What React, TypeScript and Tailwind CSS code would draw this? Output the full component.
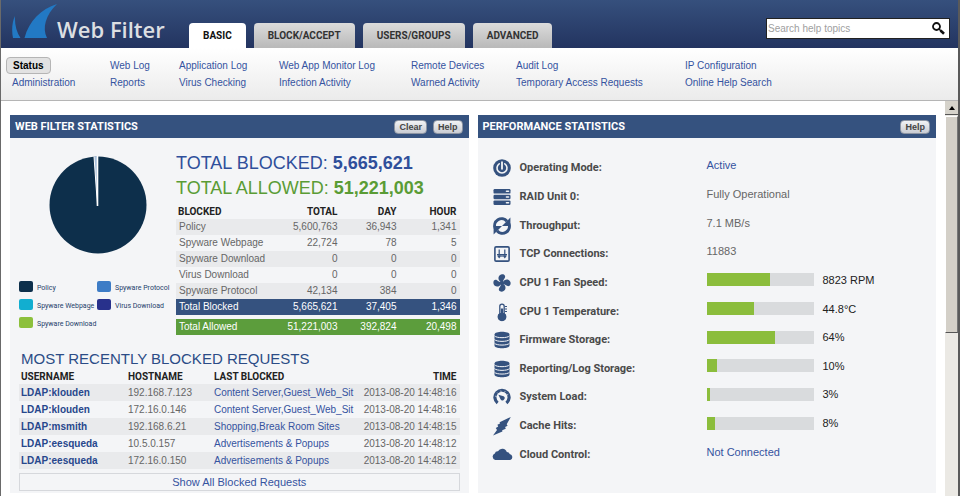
import React from 'react'

type NavColumn = { width: string; items: string[] }

const tabs = ['BASIC', 'BLOCK/ACCEPT', 'USERS/GROUPS', 'ADVANCED']

const navColumns: NavColumn[] = [
  { width: 'w-[98px]', items: ['Status', 'Administration'] },
  { width: 'w-[69px]', items: ['Web Log', 'Reports'] },
  { width: 'w-[100px]', items: ['Application Log', 'Virus Checking'] },
  { width: 'w-[132px]', items: ['Web App Monitor Log', 'Infection Activity'] },
  { width: 'w-[105px]', items: ['Remote Devices', 'Warned Activity'] },
  { width: 'w-[169px]', items: ['Audit Log', 'Temporary Access Requests'] },
  { width: 'flex-1', items: ['IP Configuration', 'Online Help Search'] },
]

const legend = [
  { label: 'Policy', color: 'bg-[#0d2f4b]' },
  { label: 'Spyware Protocol', color: 'bg-[#3d7cc6]' },
  { label: 'Spyware Webpage', color: 'bg-[#12aed0]' },
  { label: 'Virus Download', color: 'bg-[#28318c]' },
  { label: 'Spyware Download', color: 'bg-[#8cc03c]' },
]

const blocked = [
  ['Policy', '5,600,763', '36,943', '1,341'],
  ['Spyware Webpage', '22,724', '78', '5'],
  ['Spyware Download', '0', '0', '0'],
  ['Virus Download', '0', '0', '0'],
  ['Spyware Protocol', '42,134', '384', '0'],
]

const requests = [
  { user: 'LDAP:klouden', host: '192.168.7.123', last: 'Content Server,Guest_Web_Sit', time: '2013-08-20 14:48:16' },
  { user: 'LDAP:klouden', host: '172.16.0.146', last: 'Content Server,Guest_Web_Sit', time: '2013-08-20 14:48:16' },
  { user: 'LDAP:msmith', host: '192.168.6.21', last: 'Shopping,Break Room Sites', time: '2013-08-20 14:48:15' },
  { user: 'LDAP:eesqueda', host: '10.5.0.157', last: 'Advertisements & Popups', time: '2013-08-20 14:48:12' },
  { user: 'LDAP:eesqueda', host: '172.16.0.150', last: 'Advertisements & Popups', time: '2013-08-20 14:48:12' },
]

const icons: Record<string, React.ReactNode> = {
  power: (
    <>
      <circle cx="9" cy="9" r="8.8" fill="currentColor" />
      <path d="M6.2 4.8a5 5 0 1 0 5.6 0" fill="none" stroke="#f4f5f7" strokeWidth="1.6" strokeLinecap="round" />
      <path d="M9 3.2v6.6" stroke="#f4f5f7" strokeWidth="1.8" strokeLinecap="round" />
    </>
  ),
  raid: (
    <>
      <rect x="0.5" y="1" width="17" height="4.6" rx="1.2" fill="currentColor" />
      <rect x="0.5" y="6.7" width="17" height="4.6" rx="1.2" fill="currentColor" />
      <rect x="0.5" y="12.4" width="17" height="4.6" rx="1.2" fill="currentColor" />
      <path d="M13.5 3.3h2M13.5 9h2M13.5 14.7h2" stroke="#f4f5f7" strokeWidth="1.6" strokeLinecap="round" />
    </>
  ),
  throughput: (
    <g fill="none" stroke="currentColor" strokeWidth="3">
      <path d="M2.2 11.5A7 7 0 0 1 14 4.2" />
      <path d="M15.8 6.5A7 7 0 0 1 4 13.800" />
      <path d="M17.4.6v8.400H9zM.6 17.400V9H9z" fill="currentColor" stroke="none" />
    </g>
  ),
  tcp: (
    <>
      <rect x="1.9" y="1.9" width="14.2" height="14.2" rx="1.2" fill="none" stroke="currentColor" strokeWidth="1.6" />
      <path d="M6.2 4.4v7M11.8 4.4v7M4 9.5h10M9 9.5v2.6M4.6 10.4l1.6 2.2 1.6-2.2M10.2 10.4l1.6 2.2 1.6-2.2" fill="none" stroke="currentColor" strokeWidth="1.2" />
    </>
  ),
  fan: (
    <g fill="currentColor">
      <path d="M8.6 8.4C4.4 6.8 4.6 1.4 8.2.5c3-.7 4.8 1.4 3.6 3.5-.9 1.5-1.8 2.2-1.9 4.2z" />
      <path d="M9.6 8.6c1.6-4.2 7-4 7.9-.4.7 3-1.4 4.8-3.5 3.6-1.5-.9-2.2-1.8-4.2-1.9z" />
      <path d="M9.4 9.6c4.2 1.6 4 7 .4 7.9-3 .7-4.8-1.4-3.6-3.5.9-1.5 1.8-2.2 1.9-4.2z" />
      <path d="M8.4 9.4c-1.6 4.2-7 4-7.9.4C-.2 6.8 1.9 5 4 6.2c1.5.9 2.2 1.8 4.2 1.9z" />
      <circle cx="9" cy="9" r="1.6" />
    </g>
  ),
  temperature: (
    <>
      <path d="M9 1.1a2.2 2.2 0 0 1 2.2 2.2v7.4a3.8 3.8 0 1 1-4.4 0V3.3A2.2 2.2 0 0 1 9 1.1z" fill="#f4f5f7" stroke="currentColor" strokeWidth="1.3" />
      <circle cx="9" cy="13.8" r="4" fill="currentColor" />
      <path d="M9 5.5v7" stroke="currentColor" strokeWidth="2.4" />
      <path d="M12 3.5h2M12 6h2M12 8.5h2" stroke="currentColor" strokeWidth="1.2" />
    </>
  ),
  storage: (
    <>
      <path d="M1.5 3.5C1.5-.2 16.5-.2 16.5 3.5v11c0 3.7-15 3.7-15 0z" fill="currentColor" />
      <path d="M1.5 4.8c1.6 2.5 13.4 2.5 15 0M1.5 8.5c1.6 2.5 13.4 2.5 15 0M1.5 12.2c1.6 2.5 13.4 2.5 15 0" fill="none" stroke="#f4f5f7" strokeWidth="1" />
    </>
  ),
  load: (
    <>
      <path d="M4.6 14.9a7.1 7.1 0 1 1 8.8 0" fill="none" stroke="currentColor" strokeWidth="3.2" />
      <path d="M2.2 8.2l1.5.3M4.2 4.6l1 1M7.8 2.6l.3 1.4M12.2 3.2l-.7 1.2M15.2 6.4l-1.3.6" stroke="#f4f5f7" strokeWidth=".7" />
      <path d="M5.4 6.8l5.2 1.5a2.2 2.2 0 1 1-3.1 3z" fill="currentColor" />
    </>
  ),
  cache: (
    <path d="M17.8 0L6.6 5.2l.4 1.4-2.6 1.2.8 1.7L2.8 11l1.2 2L0 18.6l9.4-4-.2-1.3 3.6-1.5-.7-1.7 2.5-1.3-.9-1.6z" fill="currentColor" />
  ),
  cloud: (
    <path d="M2.2 14a3.5 3.5 0 0 1-.4-6.6A3 3 0 0 1 5 5.2a4.8 4.8 0 0 1 8.8.8 3 3 0 0 1 2.9 2 3.1 3.1 0 0 1 .5 6z" fill="currentColor" />
  ),
}

type Metric = { icon: string; label: string; text: string; percent?: number; link?: boolean }

const metrics: Metric[] = [
  { icon: 'power', label: 'Operating Mode:', text: 'Active', link: true },
  { icon: 'raid', label: 'RAID Unit 0:', text: 'Fully Operational' },
  { icon: 'throughput', label: 'Throughput:', text: '7.1 MB/s' },
  { icon: 'tcp', label: 'TCP Connections:', text: '11883' },
  { icon: 'fan', label: 'CPU 1 Fan Speed:', text: '8823 RPM', percent: 59 },
  { icon: 'temperature', label: 'CPU 1 Temperature:', text: '44.8°C', percent: 44 },
  { icon: 'storage', label: 'Firmware Storage:', text: '64%', percent: 64 },
  { icon: 'storage', label: 'Reporting/Log Storage:', text: '10%', percent: 10 },
  { icon: 'load', label: 'System Load:', text: '3%', percent: 3 },
  { icon: 'cache', label: 'Cache Hits:', text: '8%', percent: 8 },
  { icon: 'cloud', label: 'Cloud Control:', text: 'Not Connected', link: true },
]

const Header = () => (
  <header className="flex h-12 items-end justify-between bg-linear-to-b from-[#36507d] to-[#233460] pl-[11px] pr-2">
    <div className="flex items-end">
      <div className="flex w-[177px] items-end self-stretch">
        <svg width="45" height="48" viewBox="0 0 45 48" className="shrink-0" aria-hidden="true">
          <path d="M3 16C0 22-.5 31 1 38h7.5C4.5 32 2.5 24 3 16z" fill="#2279c4" />
          <path d="M45 4C29 9 17 21 12.500 38h22.500C30 28 33.500 15 45 4z" fill="#2279c4" />
        </svg>
        <h1 className="pb-0.5 font-['Open_Sans',sans-serif] text-[22px] font-semibold whitespace-nowrap text-[#dcdfe2]">Web Filter</h1>
      </div>
      <nav className="flex gap-2">
        {tabs.map((tab, i) => (
          <a
            key={tab}
            href="#"
            className={`flex h-[25px] items-center rounded-t px-3.5 font-['Roboto',sans-serif] text-[10px] font-bold ${
              i === 0 ? 'bg-white text-[#111]' : 'bg-linear-to-b from-[#dcdcdc] to-[#b9b9b9] text-[#333]'
            }`}
          >
            {tab}
          </a>
        ))}
      </nav>
    </div>
    <form className="mb-[9px] flex h-[21px] w-[184px] items-center border border-[#222] bg-white pr-1 pl-px">
      <input
        type="text"
        aria-label="Search help topics"
        placeholder="Search help topics"
        className="min-w-0 flex-1 text-[10px] outline-none placeholder:text-[#a0a0a0]"
      />
      <button type="button" aria-label="Search">
        <svg width="13" height="13" viewBox="0 0 13 13" fill="none" stroke="#111">
          <circle cx="4.5" cy="4.5" r="3.5" strokeWidth="1.8" />
          <path d="M7 7l2 2" strokeWidth="1.6" />
          <path d="M8.5 8.5l3.5 3.3" strokeWidth="2.6" />
        </svg>
      </button>
    </form>
  </header>
)

const SubNav = () => (
  <nav className="flex h-[53px] border-b border-[#b5b5b5] bg-linear-to-b from-white to-[#ebebeb] pt-[9px] pl-[11px] text-[10px] text-[#3553a0]">
    {navColumns.map((col) => (
      <div key={col.items[0]} className={`${col.width} flex flex-col items-start whitespace-nowrap`}>
        {col.items.map((item) =>
          item === 'Status' ? (
            <a key={item} href="#" className="-ml-1.5 h-[17px] rounded-sm border border-[#b5b5b5] bg-[#e2e2e2] px-1.5 leading-[15px] font-bold text-black">
              {item}
            </a>
          ) : (
            <a key={item} href="#" className="leading-[17px]">{item}</a>
          )
        )}
      </div>
    ))}
  </nav>
)

const Panel = ({ title, actions, children }: { title: string; actions: string[]; children: React.ReactNode }) => (
  <section className="flex flex-col bg-[#f4f5f7]">
    <div className="flex h-[23px] items-center justify-between bg-[#35527f] pr-1.5 pl-[5px]">
      <h2 className="pt-0.5 font-['Roboto',sans-serif] text-[11px] font-bold text-white">{title}</h2>
      <div className="flex gap-1.5">
        {actions.map((action) => (
          <button key={action} type="button" className="h-3.5 rounded border border-[#8d95a3] bg-linear-to-b from-[#f2f3f5] to-[#c9ccd3] px-1 text-[9px] leading-3 font-bold text-[#444]">
            {action}
          </button>
        ))}
      </div>
    </div>
    {children}
  </section>
)

const BlockedTable = () => (
  <table className="mt-1 w-full table-fixed text-right text-[10px] text-[#666]">
    <colgroup>
      <col />
      <col className="w-[63px]" />
      <col className="w-[59px]" />
      <col className="w-[60px]" />
    </colgroup>
    <thead className="font-['Roboto',sans-serif] text-[#222]">
      <tr className="h-3.5 leading-3.5">
        <th className="pl-0.5 text-left">BLOCKED</th>
        <th className="pr-[3px]">TOTAL</th>
        <th className="pr-[3px]">DAY</th>
        <th className="pr-[3px]">HOUR</th>
      </tr>
    </thead>
    <tbody>
      {blocked.map(([name, ...values]) => (
        <tr key={name} className="h-4 leading-4 odd:bg-[#e9eaec]">
          <td className="pl-[3px] text-left whitespace-nowrap">{name}</td>
          {values.map((value, i) => <td key={i} className="pr-[3px]">{value}</td>)}
        </tr>
      ))}
    </tbody>
    <tbody className="border-b-4 border-[#f4f5f7]">
      <tr className="h-4 bg-[#35527f] leading-4 text-white">
        <td className="pl-[3px] text-left">Total Blocked</td>
        <td className="pr-[3px]">5,665,621</td>
        <td className="pr-[3px]">37,405</td>
        <td className="pr-[3px]">1,346</td>
      </tr>
    </tbody>
    <tbody>
      <tr className="h-4 bg-[#5c9d3c] leading-4 text-white">
        <td className="pl-[3px] text-left">Total Allowed</td>
        <td className="pr-[3px]">51,221,003</td>
        <td className="pr-[3px]">392,824</td>
        <td className="pr-[3px]">20,498</td>
      </tr>
    </tbody>
  </table>
)

const RequestsTable = () => (
  <table className="mt-px w-full table-fixed text-left text-[10px] whitespace-nowrap text-[#666]">
    <colgroup>
      <col className="w-[107px]" />
      <col className="w-[86px]" />
      <col />
      <col className="w-[100px]" />
    </colgroup>
    <thead className="font-['Roboto',sans-serif] text-[#222]">
      <tr className="h-3.5 leading-3.5">
        <th className="pl-0.5">USERNAME</th>
        <th className="pl-0.5">HOSTNAME</th>
        <th className="pl-0.5">LAST BLOCKED</th>
        <th className="pr-[3px] text-right">TIME</th>
      </tr>
    </thead>
    <tbody>
      {requests.map((r, i) => (
        <tr key={i} className="h-[17px] leading-[17px] odd:bg-[#e9eaec]">
          <td className="pl-0.5 font-bold"><a href="#" className="text-[#27478c]">{r.user}</a></td>
          <td className="pl-0.5">{r.host}</td>
          <td className="pl-0.5"><a href="#" className="text-[#3553a0]">{r.last}</a></td>
          <td className="pr-[3px] text-right">{r.time}</td>
        </tr>
      ))}
    </tbody>
  </table>
)

const FilterStats = () => (
  <Panel title="WEB FILTER STATISTICS" actions={['Clear', 'Help']}>
    <div className="px-[9px] pt-[13px] pb-0.5">
      <div className="flex">
        <div className="w-[157px] shrink-0 pt-[5px]">
          <svg width="98" height="98" viewBox="0 0 98 98" className="ml-[30px]" role="img" aria-label="Blocked by type">
            <circle cx="49" cy="49" r="48.5" fill="#0d2f4b" />
            <path d="M48.5 50L45 .5 49 0z" fill="#a9c0dc" />
            <path d="M48.5 50L45 .5" stroke="#fff" strokeWidth="1" />
            <path d="M48.5 50V0" stroke="#fff" strokeWidth="1.6" />
          </svg>
          <ul className="mt-[27px] grid grid-cols-[78px_1fr] font-['Roboto',sans-serif] text-[7px] text-[#1f3f6b]">
            {legend.map((item) => (
              <li key={item.label} className="flex h-[18px] gap-1 whitespace-nowrap">
                <span className={`h-[11px] w-3.5 shrink-0 rounded-xs ${item.color}`} />
                <span className="pt-[3px] leading-2">{item.label}</span>
              </li>
            ))}
          </ul>
        </div>
        <div className="min-w-0 flex-1">
          <p className="text-[18px] leading-[25px] whitespace-nowrap text-[#2f4f9b]">TOTAL BLOCKED: <b>5,665,621</b></p>
          <p className="text-[18px] leading-[25px] whitespace-nowrap text-[#5a9c35]">TOTAL ALLOWED: <b>51,221,003</b></p>
          <BlockedTable />
        </div>
      </div>
      <h3 className="mt-[13px] pl-0.5 text-[15px] leading-[21px] text-[#2b4c86]">MOST RECENTLY BLOCKED REQUESTS</h3>
      <RequestsTable />
      <a href="#" className="mt-1 block h-[18px] border border-[#d6d8dc] text-center text-[11px] leading-4 text-[#3553a0]">
        Show All Blocked Requests
      </a>
    </div>
  </Panel>
)

const PerformanceStats = () => (
  <Panel title="PERFORMANCE STATISTICS" actions={['Help']}>
    <dl className="flex flex-1 flex-col pt-4 pb-6 pl-[15px] text-[11px]">
      {metrics.map((m) => (
        <div key={m.label} className="flex flex-1 items-center">
          <svg width="18" height="18" viewBox="0 0 18 18" className="shrink-0 overflow-visible text-[#35527f]" aria-hidden="true">
            {icons[m.icon]}
          </svg>
          <dt className="w-[196px] pl-[9px] font-['Roboto',sans-serif] leading-4 font-bold whitespace-nowrap text-[#4a4a4a]">{m.label}</dt>
          <dd className="flex items-center gap-[9px] pb-1.5 leading-4 whitespace-nowrap">
            {m.percent !== undefined && (
              <div className="h-[13px] w-[107px] bg-[#d9dbdd]">
                <div className="h-full bg-[#8bbd3c]" style={{ width: `${m.percent}%` }} />
              </div>
            )}
            {m.link ? (
              <a href="#" className="text-[#3553a0]">{m.text}</a>
            ) : (
              <span className={m.percent === undefined ? 'text-[#666]' : 'text-[#222]'}>{m.text}</span>
            )}
          </dd>
        </div>
      ))}
    </dl>
  </Panel>
)

const Scrollbar = () => (
  <div className="flex w-[13px] shrink-0 flex-col bg-[#ebe9e4]">
    <button type="button" aria-label="Scroll up" className="flex h-3.5 items-center justify-center border-b border-[#555] bg-[#d6d3cb]">
      <svg width="6" height="4" viewBox="0 0 6 4"><path d="M3 0l3 4H0z" fill="#000" /></svg>
    </button>
    <div className="mt-px h-[55%] border-t border-r border-b border-l border-t-white border-r-[#777] border-b-[#555] border-l-white bg-[#d4d0c8]" />
  </div>
)

export default function App() {
  return (
    <div className="flex min-h-screen flex-col border-r-2 border-l border-r-[#5a5a5a] border-l-[#6a6a6a] bg-white font-['Liberation_Sans',Arial,sans-serif]">
      <Header />
      <SubNav />
      <div className="flex flex-1">
        <main className="grid flex-1 grid-cols-2 gap-[9px] self-start pt-3.5 pr-[9px] pl-[9px]">
          <FilterStats />
          <PerformanceStats />
        </main>
        <Scrollbar />
      </div>
    </div>
  )
}
